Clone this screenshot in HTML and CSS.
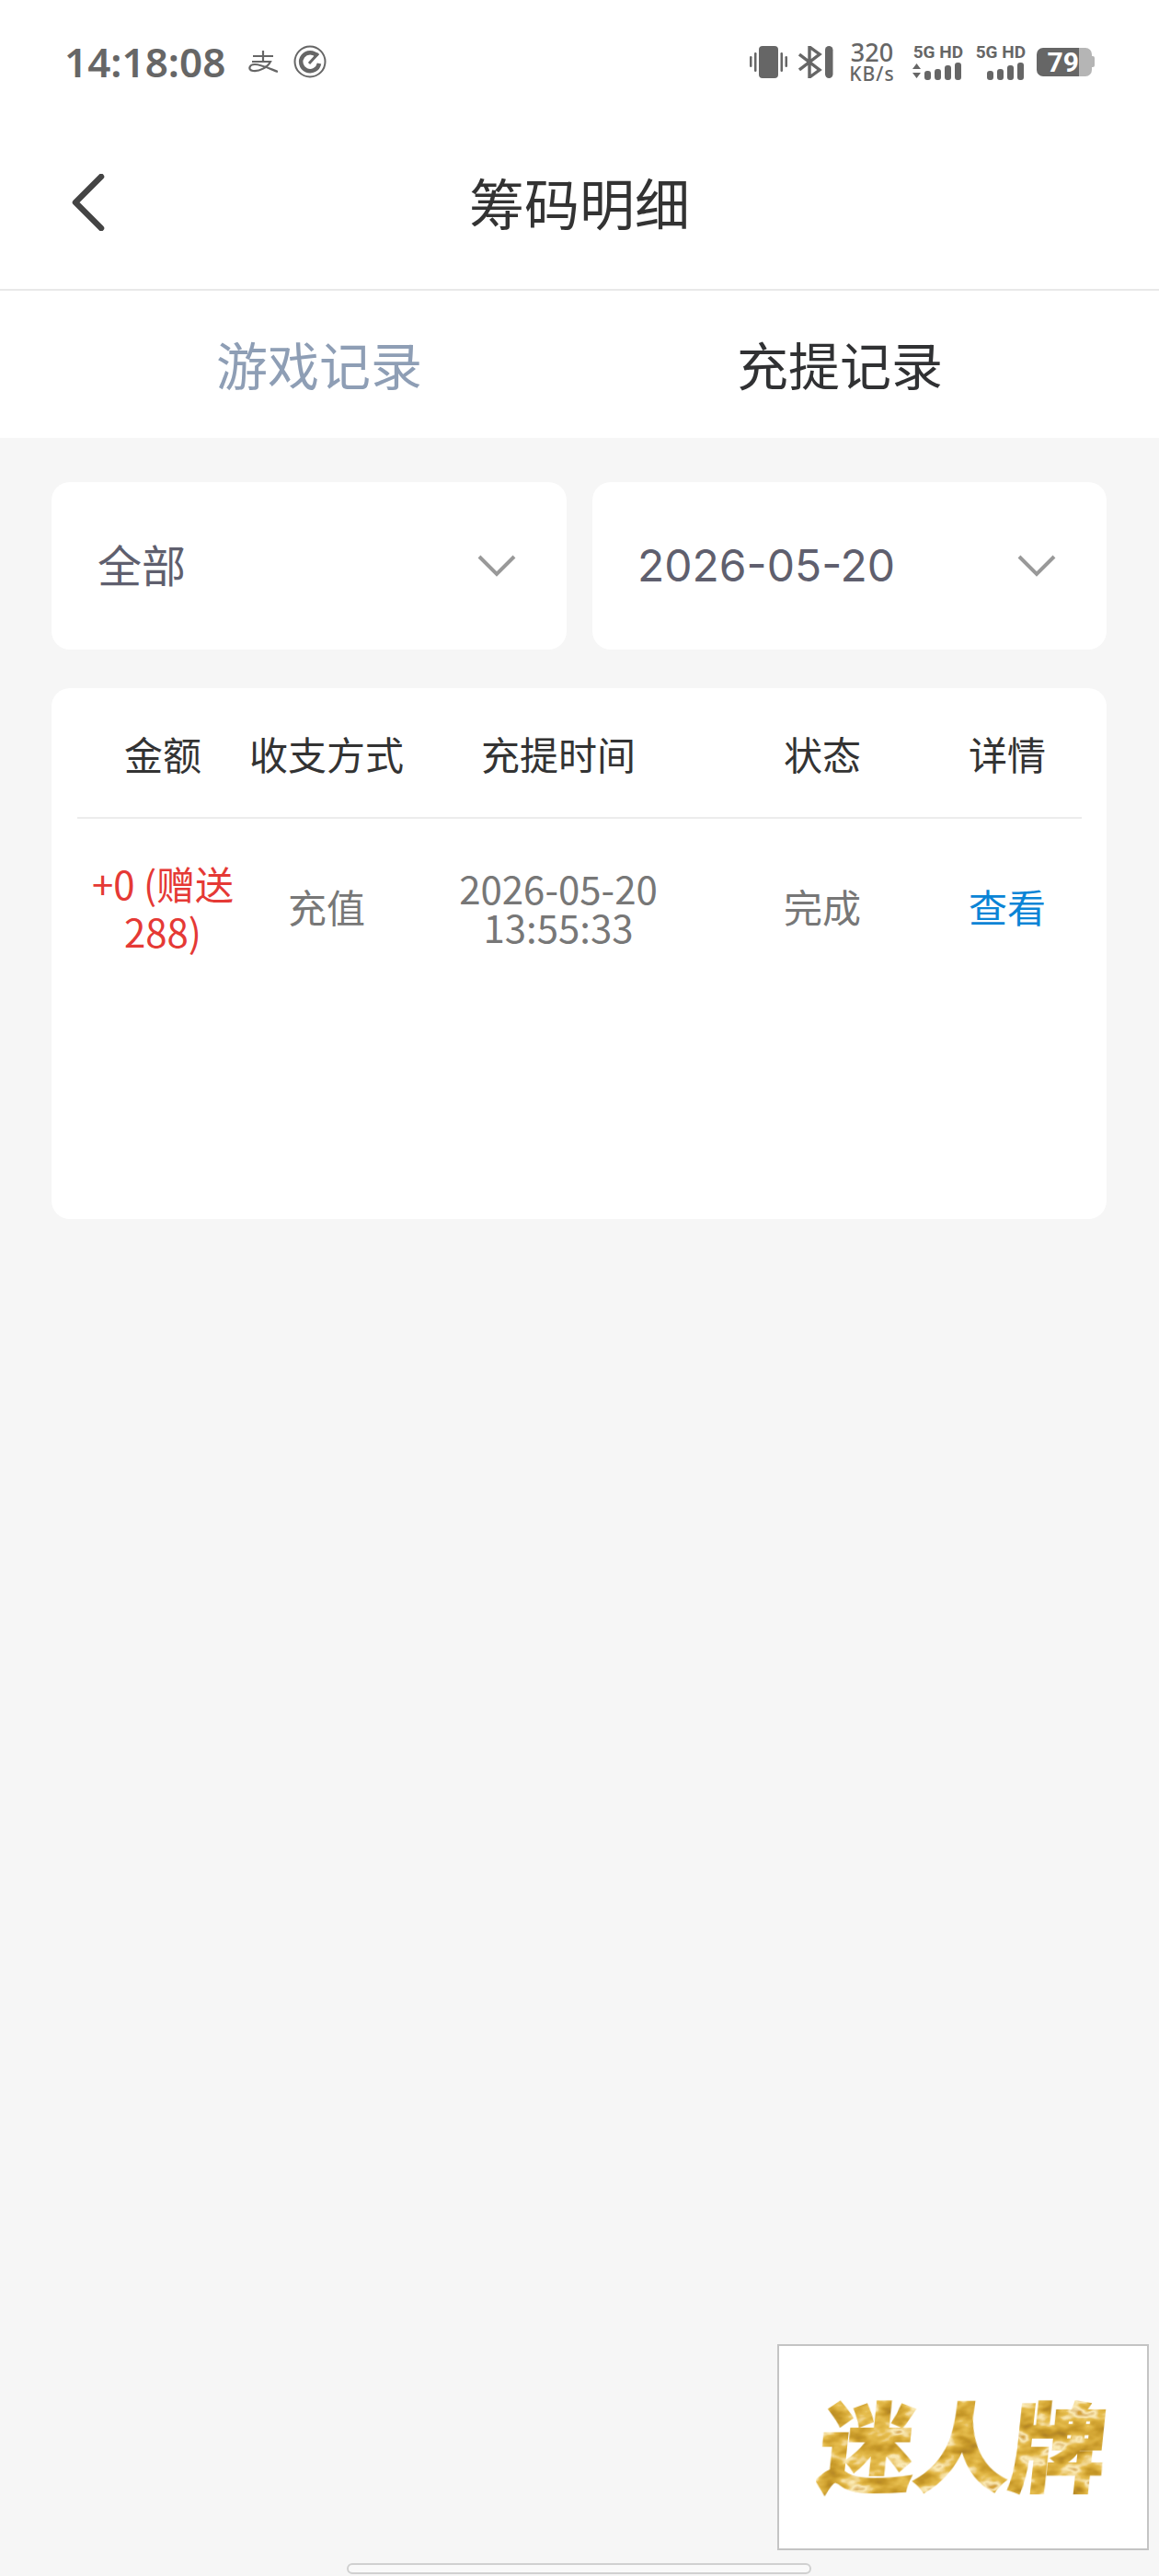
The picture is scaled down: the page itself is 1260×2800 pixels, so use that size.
FILE: index.html
```html
<!DOCTYPE html>
<html>
<head>
    <title>筹码明细</title>
    <link rel="stylesheet" href="styles.css">
</head>
<body>
    <div class="page">
        <div class="status-bar">
            <div class="status-left">
                <span class="clock">14:18:08</span>
                <svg class="icon-pay" viewBox="0 0 32 24" fill="none" stroke="#666" stroke-width="2.2">
                    <path d="M5 6H27M16 0V11M4 12H24C21 18 12 23 5 22C-1 21 1 15 7 15C14 15 24 20 32 23"/>
                </svg>
                <svg class="icon-gauge" viewBox="0 0 36 36" fill="none" stroke="#666">
                    <circle cx="18" cy="18" r="16.5" stroke-width="2"/>
                    <path d="M26 12A10 10 0 1 0 28 20" stroke-width="4.5"/>
                    <path d="M17 20L27 9" stroke-width="3"/>
                </svg>
            </div>
            <div class="status-right">
                <svg class="icon-vibrate" viewBox="0 0 41 35" fill="#666">
                    <rect x="10" y="0" width="21" height="35" rx="4"/>
                    <rect x="0" y="11" width="2.5" height="12" rx="1.2"/>
                    <rect x="5" y="7" width="2.5" height="21" rx="1.2"/>
                    <rect x="33.5" y="7" width="2.5" height="21" rx="1.2"/>
                    <rect x="38.5" y="11" width="2.5" height="12" rx="1.2"/>
                </svg>
                <svg class="icon-bt" viewBox="0 0 38 35" fill="none" stroke="#666">
                    <path d="M1 9L23 26L12 34V1L23 9L1 26" stroke-width="3.4"/>
                    <rect x="29" y="0" width="8.5" height="35" rx="4.2" fill="#666" stroke="none"/>
                </svg>
                <div class="speed">
                    <span class="speed-num">320</span>
                    <span class="speed-unit">KB/s</span>
                </div>
                <div class="signal">
                    <span class="signal-label">5G HD</span>
                    <svg class="icon-signal" viewBox="0 0 56 20" fill="#666">
                        <path d="M1 7L5.5 1L10 7ZM1 11H10L5.5 17Z"/>
                        <rect x="14" y="9" width="7" height="10" rx="3"/>
                        <rect x="25" y="7" width="7" height="12" rx="3"/>
                        <rect x="36" y="3" width="7" height="16" rx="3"/>
                        <rect x="47" y="0" width="7" height="19" rx="3"/>
                    </svg>
                </div>
                <div class="signal">
                    <span class="signal-label">5G HD</span>
                    <svg class="icon-signal" viewBox="0 0 56 20" fill="#666">
                        <rect x="14" y="9" width="7" height="10" rx="3"/>
                        <rect x="25" y="7" width="7" height="12" rx="3"/>
                        <rect x="36" y="3" width="7" height="16" rx="3"/>
                        <rect x="47" y="0" width="7" height="19" rx="3"/>
                    </svg>
                </div>
                <div class="battery">
                    <span class="battery-level">79</span>
                    <span class="battery-rest"></span>
                    <span class="battery-tip"></span>
                </div>
            </div>
        </div>

        <div class="header">
            <svg class="back" viewBox="0 0 36 62" fill="none" stroke="#444" stroke-width="6.5" stroke-linecap="round" stroke-linejoin="round">
                <path d="M32 3L4 31L32 59"/>
            </svg>
            <h1 class="title">筹码明细</h1>
        </div>

        <div class="tabs">
            <div class="tab">游戏记录</div>
            <div class="tab tab-active">充提记录</div>
        </div>

        <div class="content">
            <div class="filters">
                <div class="select">
                    <span class="select-text">全部</span>
                    <svg class="chevron" viewBox="0 0 42 24" fill="none" stroke="#999" stroke-width="4">
                        <path d="M2 2L21 21L40 2"/>
                    </svg>
                </div>
                <div class="select">
                    <span class="select-date">2026-05-20</span>
                    <svg class="chevron" viewBox="0 0 42 24" fill="none" stroke="#999" stroke-width="4">
                        <path d="M2 2L21 21L40 2"/>
                    </svg>
                </div>
            </div>

            <div class="card">
                <div class="row row-head">
                    <div>金额</div>
                    <div>收支方式</div>
                    <div>充提时间</div>
                    <div>状态</div>
                    <div>详情</div>
                </div>
                <div class="row row-body">
                    <div class="amount">+0 (赠送 288)</div>
                    <div class="cell">充值</div>
                    <div class="time">2026-05-20<br>13:55:33</div>
                    <div class="cell">完成</div>
                    <div class="cell link">查看</div>
                </div>
            </div>
        </div>

        <div class="float-logo">
            <svg class="gold" viewBox="0 0 360 150">
                <defs>
                    <filter id="marble" x="0" y="0" width="100%" height="100%">
                        <feTurbulence type="fractalNoise" baseFrequency="0.035 0.06" numOctaves="3" seed="7"/>
                        <feColorMatrix type="matrix" values="1.6 0 0 0 -0.3  1.6 0 0 0 -0.3  1.6 0 0 0 -0.3  0 0 0 0 1"/>
                        <feComponentTransfer>
                            <feFuncR type="table" tableValues="0.42 0.55 0.68 0.8 0.97 0.66"/>
                            <feFuncG type="table" tableValues="0.22 0.3 0.4 0.52 0.84 0.36"/>
                            <feFuncB type="table" tableValues="0.02 0.02 0.04 0.08 0.48 0.04"/>
                        </feComponentTransfer>
                        <feComposite in2="SourceGraphic" operator="in"/>
                    </filter>
                </defs>
                <text class="gold-text" x="180" y="114" text-anchor="middle" filter="url(#marble)">迷人牌</text>
            </svg>
        </div>
        <div class="home-bar"></div>
    </div>
</body>
</html>
```

FILE: styles.css
```css
* {
    box-sizing: border-box;
}

body {
    margin: 0;
    background: #f6f6f6;
    font-family: "Noto Sans CJK SC", "Noto Sans", sans-serif;
}

.page {
    position: relative;
    width: 1260px;
    height: 2800px;
    overflow: hidden;
    background: #f6f6f6;
}

/* status bar */
.status-bar {
    display: flex;
    justify-content: space-between;
    align-items: center;
    height: 134px;
    padding: 0 70px;
    background: #fff;
    color: #666;
}

.status-left,
.status-right {
    display: flex;
    align-items: center;
}

.clock {
    width: 177px;
    font-family: "Noto Sans", sans-serif;
    font-size: 44px;
    font-weight: 600;
    line-height: 1;
    white-space: nowrap;
}

.icon-pay {
    width: 32px;
    height: 24px;
    margin-left: 23px;
}

.icon-gauge {
    width: 36px;
    height: 36px;
    margin-left: 17px;
}

.icon-vibrate {
    width: 41px;
    height: 35px;
}

.icon-bt {
    width: 38px;
    height: 35px;
    margin-left: 12px;
}

.speed {
    display: flex;
    flex-direction: column;
    align-items: center;
    width: 50px;
    margin-left: 17px;
    font-family: "Noto Sans", sans-serif;
    line-height: 1;
}

.speed-num {
    font-size: 27px;
    font-weight: 500;
}

.speed-unit {
    font-size: 21px;
    font-weight: 500;
    letter-spacing: 1px;
}

.signal {
    display: flex;
    flex-direction: column;
    align-items: flex-end;
    width: 56px;
    margin-left: 18px;
}

.signal + .signal {
    margin-left: 12px;
}

.signal-label {
    font-family: "Roboto", sans-serif;
    font-size: 19px;
    font-weight: 700;
    line-height: 20px;
    white-space: nowrap;
}

.icon-signal {
    width: 56px;
    height: 20px;
    margin-top: 1px;
}

.battery {
    display: flex;
    align-items: center;
    margin-left: 12px;
}

.battery-level {
    width: 46px;
    height: 31px;
    border-radius: 7px 0 0 7px;
    background: #666;
    color: #fff;
    font-family: "Roboto", sans-serif;
    font-size: 30px;
    font-weight: 700;
    line-height: 31px;
    text-align: right;
}

.battery-rest {
    width: 14px;
    height: 31px;
    border-radius: 0 7px 7px 0;
    background: #b5b5b5;
}

.battery-tip {
    width: 3px;
    height: 12px;
    border-radius: 0 2px 2px 0;
    background: #b5b5b5;
}

/* header */
.header {
    display: flex;
    align-items: center;
    justify-content: center;
    position: relative;
    height: 182px;
    background: #fff;
    border-bottom: 2px solid #e8e8e8;
}

.back {
    position: absolute;
    left: 78px;
    top: 55px;
    width: 36px;
    height: 62px;
}

.title {
    margin: 0 0 10px;
    color: #333;
    font-size: 60px;
    font-weight: 400;
    line-height: 1.2;
}

/* tabs */
.tabs {
    display: grid;
    grid-template-columns: 1fr 1fr;
    height: 160px;
    padding: 0 64px;
    background: #fff;
}

.tab {
    display: flex;
    align-items: center;
    justify-content: center;
    padding-bottom: 4px;
    color: #8e9eb5;
    font-size: 56px;
}

.tab-active {
    color: #303133;
}

/* filters */
.content {
    padding: 48px 57px 0 56px;
}

.filters {
    display: grid;
    grid-template-columns: 560px 559px;
    gap: 28px;
}

.select {
    display: flex;
    align-items: center;
    justify-content: space-between;
    height: 182px;
    padding: 0 55px 0 50px;
    border-radius: 20px;
    background: #fff;
    color: #5f5f6e;
    font-size: 48px;
}

.select-text {
    margin-bottom: 7px;
}

.select-date {
    margin: 0 0 1px -1px;
    font-family: "Inter", sans-serif;
}

.chevron {
    width: 42px;
    height: 24px;
}

/* table */
.card {
    height: 577px;
    margin-top: 42px;
    padding: 0 27px 0 28px;
    border-radius: 20px;
    background: #fff;
}

.row {
    display: grid;
    grid-template-columns: 186px 170px 334px 240px 162px;
    align-items: center;
    text-align: center;
    font-size: 42px;
}

.row-head {
    height: 142px;
    border-bottom: 2px solid #ececec;
    color: #333;
}

.row-body {
    height: 192px;
    color: #777;
}

.cell {
    margin-bottom: 3px;
}

.amount {
    padding: 0 10px;
    color: #e53935;
    line-height: 52px;
}

.time {
    line-height: 42px;
}

.link {
    color: #0a84d6;
}

/* floating logo */
.float-logo {
    position: absolute;
    left: 845px;
    top: 2548px;
    display: flex;
    align-items: center;
    justify-content: center;
    width: 404px;
    height: 224px;
    border: 2px solid #c4c4c4;
    background: #fff;
}

.gold {
    width: 360px;
    height: 150px;
    transform: skewX(-6deg);
}

.gold-text {
    font-size: 104px;
    font-weight: 900;
    stroke: #000;
    stroke-width: 2px;
}

.home-bar {
    position: absolute;
    left: 377px;
    top: 2786px;
    width: 505px;
    height: 12px;
    border: 2px solid #d0d0d0;
    border-radius: 6px;
    background: #f9f9f9;
}
```
